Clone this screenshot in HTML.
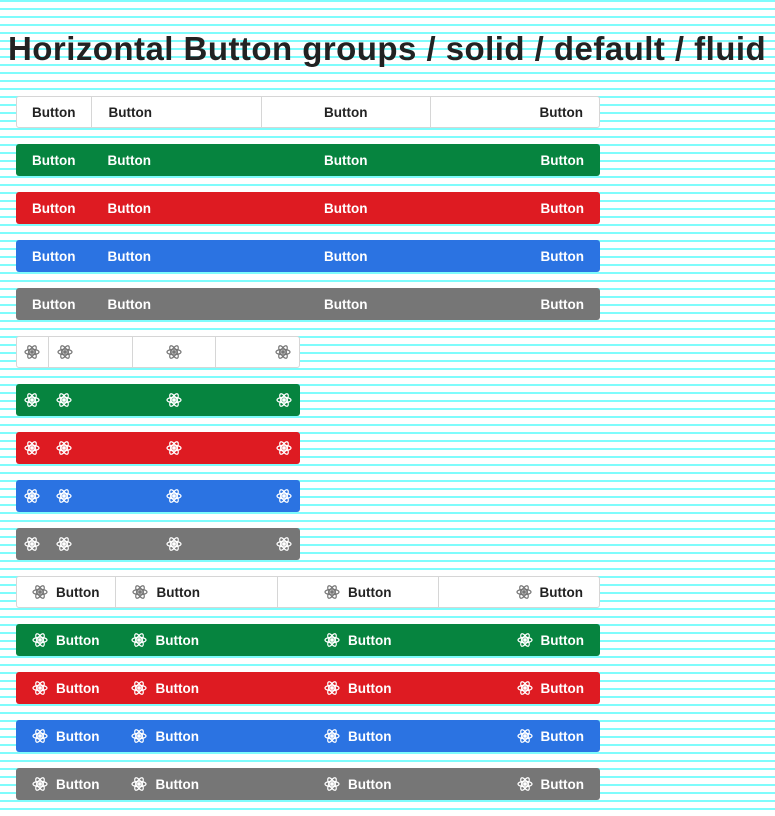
<!DOCTYPE html>
<html><head><meta charset="utf-8"><style>
html,body{margin:0;padding:0}
body{width:775px;height:816px;overflow:hidden;font-family:"Liberation Sans",sans-serif;
background:repeating-linear-gradient(to bottom,#7ffcfc 0,#7ffcfc 2px,#fff 2px,#fff 8px);}
h1{position:absolute;left:8px;top:30px;margin:0;font-size:33px;font-weight:bold;color:#222;white-space:nowrap;letter-spacing:0.46px}
.g{position:absolute;left:16px;height:32px;display:flex;border-radius:3px;overflow:hidden;font-size:13.5px;font-weight:bold;box-sizing:border-box}
.g>div{display:flex;align-items:center;padding:0 16px;box-sizing:border-box;height:32px}
.w{background:#fff;border:1px solid #d6d6d6;color:#222}
.w>div+div{border-left:1px solid #d6d6d6}
.w>div{height:30px}
.gr{background:#06843f;color:#fff}.rd{background:#de1b22;color:#fff}.bl{background:#2b73e2;color:#fff}.gy{background:#767676;color:#fff}
.t{width:584px}.t>div:not(:first-child){flex:1}
.i{width:284px}.i>div:first-child{width:32px;padding:0 8px}.i>div:not(:first-child){flex:1;padding:0 8px}
.w.i>div:first-child{width:31px;padding:0 7px}
.w.t>div:first-child{padding-left:15px}
.c{justify-content:center}.r{justify-content:flex-end}
svg{width:16px;height:16px;flex:none}
.b svg{margin-right:8px}
.w svg{color:#777}
</style></head><body>
<h1>Horizontal Button groups / solid / default / fluid</h1>
<svg style="display:none"><defs><g id="a" fill="none" stroke="currentColor" stroke-width="1.2"><ellipse cx="8" cy="8" rx="7" ry="2.8"/><ellipse cx="8" cy="8" rx="7" ry="2.8" transform="rotate(60 8 8)"/><ellipse cx="8" cy="8" rx="7" ry="2.8" transform="rotate(120 8 8)"/><circle cx="8" cy="8" r="1.3" fill="currentColor"/></g></defs></svg>

<div class="g t w" style="top:96px"><div>Button</div><div>Button</div><div class="c">Button</div><div class="r">Button</div></div>
<div class="g t gr" style="top:144px"><div>Button</div><div>Button</div><div class="c">Button</div><div class="r">Button</div></div>
<div class="g t rd" style="top:192px"><div>Button</div><div>Button</div><div class="c">Button</div><div class="r">Button</div></div>
<div class="g t bl" style="top:240px"><div>Button</div><div>Button</div><div class="c">Button</div><div class="r">Button</div></div>
<div class="g t gy" style="top:288px"><div>Button</div><div>Button</div><div class="c">Button</div><div class="r">Button</div></div>

<div class="g i w" style="top:336px"><div><svg><use href="#a"/></svg></div><div><svg><use href="#a"/></svg></div><div class="c"><svg><use href="#a"/></svg></div><div class="r"><svg><use href="#a"/></svg></div></div>
<div class="g i gr" style="top:384px"><div><svg><use href="#a"/></svg></div><div><svg><use href="#a"/></svg></div><div class="c"><svg><use href="#a"/></svg></div><div class="r"><svg><use href="#a"/></svg></div></div>
<div class="g i rd" style="top:432px"><div><svg><use href="#a"/></svg></div><div><svg><use href="#a"/></svg></div><div class="c"><svg><use href="#a"/></svg></div><div class="r"><svg><use href="#a"/></svg></div></div>
<div class="g i bl" style="top:480px"><div><svg><use href="#a"/></svg></div><div><svg><use href="#a"/></svg></div><div class="c"><svg><use href="#a"/></svg></div><div class="r"><svg><use href="#a"/></svg></div></div>
<div class="g i gy" style="top:528px"><div><svg><use href="#a"/></svg></div><div><svg><use href="#a"/></svg></div><div class="c"><svg><use href="#a"/></svg></div><div class="r"><svg><use href="#a"/></svg></div></div>

<div class="g t b w" style="top:576px"><div><svg><use href="#a"/></svg>Button</div><div><svg><use href="#a"/></svg>Button</div><div class="c"><svg><use href="#a"/></svg>Button</div><div class="r"><svg><use href="#a"/></svg>Button</div></div>
<div class="g t b gr" style="top:624px"><div><svg><use href="#a"/></svg>Button</div><div><svg><use href="#a"/></svg>Button</div><div class="c"><svg><use href="#a"/></svg>Button</div><div class="r"><svg><use href="#a"/></svg>Button</div></div>
<div class="g t b rd" style="top:672px"><div><svg><use href="#a"/></svg>Button</div><div><svg><use href="#a"/></svg>Button</div><div class="c"><svg><use href="#a"/></svg>Button</div><div class="r"><svg><use href="#a"/></svg>Button</div></div>
<div class="g t b bl" style="top:720px"><div><svg><use href="#a"/></svg>Button</div><div><svg><use href="#a"/></svg>Button</div><div class="c"><svg><use href="#a"/></svg>Button</div><div class="r"><svg><use href="#a"/></svg>Button</div></div>
<div class="g t b gy" style="top:768px"><div><svg><use href="#a"/></svg>Button</div><div><svg><use href="#a"/></svg>Button</div><div class="c"><svg><use href="#a"/></svg>Button</div><div class="r"><svg><use href="#a"/></svg>Button</div></div>
</body></html>
